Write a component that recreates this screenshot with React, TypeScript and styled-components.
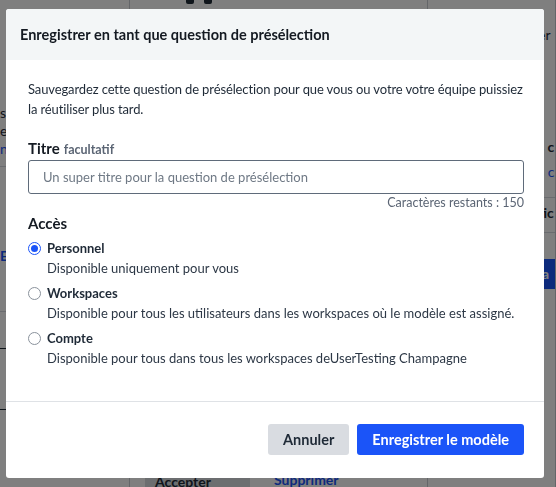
import React from 'react';
import styled, { createGlobalStyle } from 'styled-components';

const Global = createGlobalStyle`
    html, body {
        margin: 0;
        padding: 0;
        width: 556px;
        height: 487px;
        overflow: hidden;
        font-family: Lato, "Open Sans", "Liberation Sans", sans-serif;
        -webkit-font-smoothing: antialiased;
    }
    * {
        box-sizing: border-box;
    }
`;

/* ---------- page behind the modal ---------- */

const Page = styled.div`
    display: grid;
    grid-template-columns: 130px 298px 1fr;
    width: 556px;
    height: 487px;
    background: #ffffff;
    color: #1f2a37;
    font-size: 14px;
`;

const Column = styled.div<{ $pad?: string }>`
    display: flex;
    flex-direction: column;
    border-right: 1px solid #c9cdd2;
    padding: ${(p) => p.$pad || '0'};
    overflow: hidden;
`;

const Rule = styled.div<{ $gap?: number; $dark?: boolean }>`
    height: 1px;
    margin-top: ${(p) => p.$gap || 0}px;
    background: ${(p) => (p.$dark ? '#1f2a37' : '#d5d9de')};
`;

const BgText = styled.div<{ $gap?: number; $blue?: boolean; $bold?: boolean }>`
    margin-top: ${(p) => p.$gap || 0}px;
    color: ${(p) => (p.$blue ? '#1b54f8' : '#1f2a37')};
    font-weight: ${(p) => (p.$bold ? 700 : 400)};
    white-space: nowrap;
    line-height: 18px;
`;

const BgButton = styled.div<{ $gap?: number }>`
    margin-top: ${(p) => p.$gap || 0}px;
    height: 30px;
    background: #1b54f8;
    color: #fff;
    padding-left: 4px;
    line-height: 30px;
    font-weight: 700;
`;

const TopRow = styled.div`
    display: flex;
    gap: 10px;
    padding-left: 56px;
    margin-top: -6px;
`;

const Checkbox = styled.div`
    width: 12px;
    height: 12px;
    margin: -6px 0 0 57px;
    border: 1px solid #1f2a37;
    border-radius: 2px;
`;

const Glyph = styled.div`
    width: 8px;
    height: 10px;
    border-radius: 2px;
    background: #1f2a37;
`;

const BottomBar = styled.div`
    margin-top: auto;
    display: flex;
    align-items: flex-start;
    gap: 24px;
    height: 16px;
`;

const GreyButton = styled.div`
    width: 105px;
    height: 16px;
    margin-left: 15px;
    padding-left: 10px;
    background: #d9dce1;
    font-weight: 700;
    font-size: 14px;
    line-height: 22px;
    color: #1f2a37;
`;

/* ---------- overlay + modal ---------- */

const Overlay = styled.div`
    position: fixed;
    inset: 0;
    background: rgba(0, 0, 0, 0.5);
    padding: 9px 0 0 6px;
`;

const Modal = styled.div`
    width: 538px;
    height: 469px;
    background: #ffffff;
    border-radius: 3px;
    display: flex;
    flex-direction: column;
    overflow: hidden;
`;

const Header = styled.div`
    height: 51px;
    background: #f3f6f7;
    display: flex;
    align-items: center;
    padding: 0 14px;
`;

const Title = styled.h2`
    margin: 0;
    font-size: 14.5px;
    font-weight: 700;
    color: #141a22;
`;

const Body = styled.div`
    flex: 1;
    padding: 19px 20px 0 22px;
    display: flex;
    flex-direction: column;
`;

const Intro = styled.p`
    margin: 0;
    font-size: 13px;
    line-height: 20px;
    letter-spacing: -0.12px;
    color: #1f2a37;
`;

const FieldLabel = styled.label`
    margin-top: 19px;
    font-size: 15px;
    font-weight: 700;
    color: #141a22;
    line-height: 20px;
`;

const Optional = styled.span`
    font-size: 12.5px;
    font-weight: 700;
    color: #5b6574;
    margin-left: 4px;
`;

const Input = styled.input`
    height: 34px;
    width: 100%;
    border: 1px solid #5f6b7a;
    border-radius: 3px;
    padding: 0 14px;
    font-family: inherit;
    font-size: 13px;
    color: #1f2a37;
    outline: none;
    &::placeholder {
        color: #6f7985;
    }
`;

const Counter = styled.div`
    margin-top: 1px;
    text-align: right;
    font-size: 12.5px;
    color: #5b6574;
    line-height: 16px;
`;

const Section = styled.div`
    margin-top: 1px;
    font-size: 15px;
    font-weight: 700;
    color: #141a22;
    line-height: 22px;
`;

const Options = styled.div`
    margin-top: 5px;
    display: flex;
    flex-direction: column;
    gap: 7px;
`;

const Option = styled.label`
    display: grid;
    grid-template-columns: 19px 1fr;
    row-gap: 2px;
    align-items: center;
`;

const Radio = styled.span<{ $on?: boolean }>`
    width: 13px;
    height: 13px;
    border-radius: 50%;
    border: 1px solid ${(p) => (p.$on ? '#1b54f8' : '#8a929c')};
    background: #fff;
    display: flex;
    align-items: center;
    justify-content: center;
    &::after {
        content: '';
        width: 7px;
        height: 7px;
        border-radius: 50%;
        background: ${(p) => (p.$on ? '#1b54f8' : 'transparent')};
    }
`;

const OptionName = styled.span`
    font-size: 13px;
    font-weight: 700;
    color: #1f2a37;
    line-height: 18px;
`;

const OptionDesc = styled.span`
    grid-column: 2;
    font-size: 13px;
    color: #2d3846;
    line-height: 18px;
`;

const Footer = styled.div`
    height: 77px;
    border-top: 1px solid #dfe2e6;
    display: flex;
    justify-content: flex-end;
    align-items: flex-start;
    gap: 8px;
    padding: 22px 20px 0;
`;

const Button = styled.button<{ $primary?: boolean }>`
    height: 31px;
    padding: 0 15px;
    border: none;
    border-radius: 3px;
    font-family: inherit;
    font-size: 14.5px;
    font-weight: 700;
    cursor: pointer;
    background: ${(p) => (p.$primary ? '#1b54f8' : '#d9dce1')};
    color: ${(p) => (p.$primary ? '#ffffff' : '#1f2a37')};
`;

const options = [
    { name: 'Personnel', desc: 'Disponible uniquement pour vous', on: true },
    {
        name: 'Workspaces',
        desc: 'Disponible pour tous les utilisateurs dans les workspaces où le modèle est assigné.',
    },
    {
        name: 'Compte',
        desc: 'Disponible pour tous dans tous les workspaces deUserTesting Champagne',
    },
];

export default function App() {
    return (
        <>
            <Global />
            <Page>
                <Column $pad="104px 0 0 0">
                    <BgText>s</BgText>
                    <BgText>e:</BgText>
                    <BgText $blue>n</BgText>
                    <Rule $gap={8} />
                    <BgText $gap={80} $blue $bold>
                        Er
                    </BgText>
                    <Rule $gap={46} />
                    <Rule $gap={36} $dark />
                    <Rule $gap={60} $dark />
                </Column>
                <Column>
                    <TopRow>
                        <Glyph />
                        <Glyph />
                    </TopRow>
                    <BottomBar>
                        <GreyButton>Accepter</GreyButton>
                        <BgText $blue $bold>
                            Supprimer
                        </BgText>
                    </BottomBar>
                </Column>
                <Column $pad="16px 0 0 110px">
                    <Checkbox />
                    <BgText $gap={4}>er</BgText>
                    <BgText $gap={94} $bold>
                        s c
                    </BgText>
                    <BgText $gap={7} $blue>
                        s c
                    </BgText>
                    <Rule $gap={16} />
                    <BgText $gap={6} $bold>
                        tic
                    </BgText>
                    <Rule $gap={10} />
                    <BgButton $gap={26}>a</BgButton>
                </Column>
            </Page>
            <Overlay>
                <Modal>
                    <Header>
                        <Title>Enregistrer en tant que question de présélection</Title>
                    </Header>
                    <Body>
                        <Intro>
                            Sauvegardez cette question de présélection pour que vous ou votre votre équipe puissiez
                            la réutiliser plus tard.
                        </Intro>
                        <FieldLabel>
                            Titre<Optional>facultatif</Optional>
                        </FieldLabel>
                        <Input placeholder="Un super titre pour la question de présélection" />
                        <Counter>Caractères restants : 150</Counter>
                        <Section>Accès</Section>
                        <Options>
                            {options.map((o) => (
                                <Option key={o.name}>
                                    <Radio $on={o.on} />
                                    <OptionName>{o.name}</OptionName>
                                    <OptionDesc>{o.desc}</OptionDesc>
                                </Option>
                            ))}
                        </Options>
                    </Body>
                    <Footer>
                        <Button>Annuler</Button>
                        <Button $primary>Enregistrer le modèle</Button>
                    </Footer>
                </Modal>
            </Overlay>
        </>
    );
}
